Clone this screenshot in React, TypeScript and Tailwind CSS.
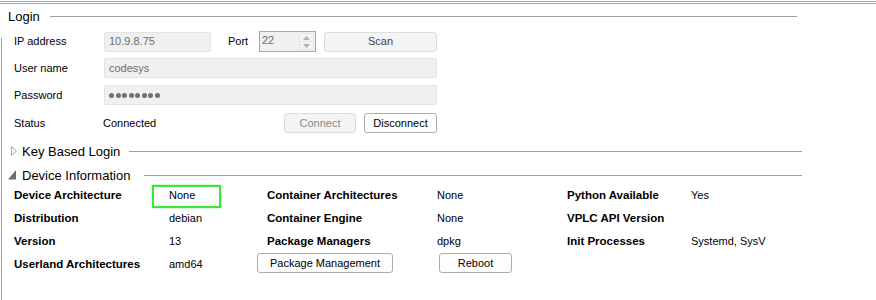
import React from "react";

const font = { fontFamily: '"Liberation Sans", Arial, sans-serif' };

function Header({ title, textW, endMr, icon }: { title: string; textW: string; endMr: string; icon?: React.ReactNode }) {
  return (
    <div className={`flex items-center h-[16px] ${endMr}`}>
      {icon}
      <span className={`${textW} shrink-0 text-[13px] text-black leading-none`}>{title}</span>
      <div className="flex-1 h-px bg-[#a0a0a0]" />
    </div>
  );
}

function Btn({ children, cls }: { children: React.ReactNode; cls: string }) {
  return (
    <div className={`h-[20px] flex items-center justify-center rounded-[3px] border text-[11px] leading-none ${cls}`}>
      {children}
    </div>
  );
}

export default function App() {
  const info: [string, string, string, string, string, string][] = [
    ["Device Architecture", "None", "Container Architectures", "None", "Python Available", "Yes"],
    ["Distribution", "debian", "Container Engine", "None", "VPLC API Version", ""],
    ["Version", "13", "Package Managers", "dpkg", "Init Processes", "Systemd, SysV"],
  ];
  return (
    <div className="relative w-[876px] h-[300px] bg-white overflow-hidden text-black" style={font}>
      {/* top double line */}
      <div className="mt-[1px] h-[3px] border-t border-b border-[#a8a8a8]" />
      {/* decorative left frame line */}
      <div className="absolute left-[1px] top-[38px] bottom-0 w-px bg-[#a0a0a0]" />

      {/* Login header */}
      <div className="h-[24px] flex items-center pl-[8px] mr-[79px]">
        <span className="w-[42px] shrink-0 text-[13px] leading-none">Login</span>
        <div className="flex-1 h-px bg-[#a0a0a0]" />
      </div>

      {/* Login rows */}
      <div className="mt-[3px] pl-[14px] flex flex-col text-[11px] leading-none">
        <div className="flex items-center h-[21px]">
          <span className="w-[90px]">IP address</span>
          <div className="w-[107px] h-[20px] bg-[#f0f0f0] border border-[#e3e3e3] rounded-[2px] flex items-center pl-[4px] text-[#6d6d6d]">10.9.8.75</div>
          <span className="ml-[17px] w-[31px]">Port</span>
          <div className="w-[57px] h-[21px] bg-[#f0f0f0] border border-[#a8a8a8] flex items-stretch">
            <span className="flex-1 pl-[2px] pt-[3px] text-[#6d6d6d]">22</span>
            <div className="w-[15px] flex flex-col my-[1px] mr-[1px]">
              <div className="flex-1 flex items-center justify-center border border-[#e6e6e6] bg-[#f3f3f3]">
                <svg width="7" height="4" viewBox="0 0 7 4"><path d="M0 4 L3.5 0 L7 4 Z" fill="#b0b0b0" /></svg>
              </div>
              <div className="flex-1 flex items-center justify-center border border-t-0 border-[#e6e6e6] bg-[#f3f3f3]">
                <svg width="7" height="4" viewBox="0 0 7 4"><path d="M0 0 L7 0 L3.5 4 Z" fill="#b0b0b0" /></svg>
              </div>
            </div>
          </div>
          <Btn cls="ml-[8px] w-[113px] bg-[#f4f4f4] border-[#dcdcdc] text-[#444]">Scan</Btn>
        </div>
        <div className="flex items-center h-[20px] mt-[6px]">
          <span className="w-[90px]">User name</span>
          <div className="w-[333px] h-[20px] bg-[#f0f0f0] border border-[#e3e3e3] rounded-[2px] flex items-center pl-[4px] text-[#6d6d6d]">codesys</div>
        </div>
        <div className="flex items-center h-[20px] mt-[7px]">
          <span className="w-[90px]">Password</span>
          <div className="w-[333px] h-[20px] bg-[#f0f0f0] border border-[#e3e3e3] rounded-[2px] flex items-center pl-[4px] gap-[1.5px]">
            {Array.from({ length: 8 }).map((_, i) => (
              <span key={i} className="w-[5px] h-[5px] rounded-full bg-[#707070]" />
            ))}
          </div>
        </div>
        <div className="flex items-center h-[20px] mt-[8px]">
          <span className="w-[89px]">Status</span>
          <span className="w-[181px]">Connected</span>
          <Btn cls="w-[72px] bg-[#f4f4f4] border-[#dcdcdc] text-[#8a8a8a]">Connect</Btn>
          <Btn cls="ml-[8px] w-[73px] bg-[#fdfdfd] border-[#adadad] text-black">Disconnect</Btn>
        </div>
      </div>

      {/* Key based login */}
      <div className="mt-[10px] pl-[11px]">
        <Header
          title="Key Based Login"
          textW="w-[107px]"
          endMr="mr-[74px]"
          icon={
            <svg width="11" height="10" viewBox="0 0 11 10" className="shrink-0">
              <path d="M0.5 0.5 L5.5 5 L0.5 9.5 Z" fill="white" stroke="#a6a6a6" strokeWidth="1" />
            </svg>
          }
        />
      </div>
      <div className="mt-[8px] pl-[8px]">
        <Header
          title="Device Information"
          textW="w-[122px]"
          endMr="mr-[74px]"
          icon={
            <svg width="14" height="10" viewBox="0 0 14 10" className="shrink-0">
              <path d="M8 0 L8 9.5 L0 9.5 Z" fill="#6e6e6e" />
            </svg>
          }
        />
      </div>

      {/* Device info grid */}
      <div className="mt-[1px] pl-[14px] text-[11px] leading-none">
        {info.map((r, i) => (
          <div key={i} className="grid grid-cols-[155px_98px_170px_130px_124px_1fr] items-center h-[23px]">
            <span className="font-bold text-[11.5px]">{r[0]}</span>
            <span className="relative">
              {r[1]}
              {i === 0 && (
                <span className="absolute left-[-17px] top-[-5px] w-[69px] h-[23px] border-2 border-[#3ae63a] shadow-[0_0_2px_rgba(60,220,60,0.6)]" />
              )}
            </span>
            <span className="font-bold text-[11.5px]">{r[2]}</span>
            <span>{r[3]}</span>
            <span className="font-bold text-[11.5px]">{r[4]}</span>
            <span>{r[5]}</span>
          </div>
        ))}
        <div className="grid grid-cols-[155px_98px_170px_130px_124px_1fr] items-center h-[23px]">
          <span className="font-bold text-[11.5px]">Userland Architectures</span>
          <span>amd64</span>
          <Btn cls="-mt-[3px] ml-[-10px] w-[136px] bg-[#fdfdfd] border-[#adadad] text-black">Package Management</Btn>
          <Btn cls="-mt-[3px] ml-[2px] w-[73px] bg-[#fdfdfd] border-[#adadad] text-black">Reboot</Btn>
          <span />
          <span />
        </div>
      </div>
    </div>
  );
}
